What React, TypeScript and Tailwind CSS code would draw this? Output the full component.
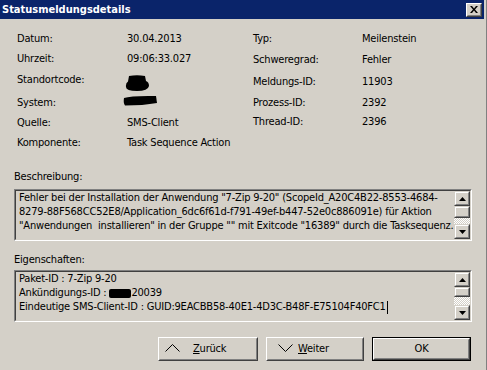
import React from "react";

const raised =
  "border border-t-[#d4d0c8] border-l-[#d4d0c8] border-b-[#404040] border-r-[#404040]";
const raisedInner =
  "border border-t-white border-l-white border-b-[#808080] border-r-[#808080]";

function ScrollBtn({ dir }: { dir: "up" | "down" }) {
  return (
    <div className={`h-[15px] w-[16px] ${raised} bg-[#d4d0c8]`}>
      <div className={`h-full w-full ${raisedInner} flex items-center justify-center`}>
        <svg width="7" height="4" viewBox="0 0 7 4">
          {dir === "up" ? (
            <polygon points="3.5,0 7,4 0,4" fill="#000" />
          ) : (
            <polygon points="0,0 7,0 3.5,4" fill="#000" />
          )}
        </svg>
      </div>
    </div>
  );
}

function ScrollBar({ thumb, track }: { thumb: string; track: string }) {
  return (
    <div className="w-[16px] flex flex-col shrink-0">
      <ScrollBtn dir="up" />
      <div className={`${thumb} w-[16px] ${raised} bg-[#d4d0c8]`}>
        <div className={`h-full w-full ${raisedInner}`} />
      </div>
      <div
        className={`${track} w-[16px] bg-[repeating-conic-gradient(#ffffff_0_25%,#d4d0c8_0_50%)] bg-[length:2px_2px]`}
      />
      <ScrollBtn dir="down" />
    </div>
  );
}

function Box({
  children,
  thumb,
  track,
}: {
  children: React.ReactNode;
  thumb: string;
  track: string;
}) {
  return (
    <div className="ml-[14px] w-[458px] h-[52px] border border-t-[#808080] border-l-[#808080] border-b-white border-r-white">
      <div className="h-full w-full border border-t-[#404040] border-l-[#404040] border-b-[#d4d0c8] border-r-[#d4d0c8] flex">
        <div className="flex-1 overflow-hidden pl-[3px] text-[11px] leading-[14px] whitespace-pre">
          {children}
        </div>
        <ScrollBar thumb={thumb} track={track} />
      </div>
    </div>
  );
}

function Chevron({ up }: { up: boolean }) {
  return (
    <svg width="15" height="8" viewBox="0 0 15 8" className="shrink-0">
      <polyline
        points={up ? "0.5,7.5 7.5,0.5 14.5,7.5" : "0.5,0.5 7.5,7.5 14.5,0.5"}
        fill="none"
        stroke="#000"
        strokeWidth="1"
      />
    </svg>
  );
}

function PushButton({
  w,
  children,
  isDefault,
}: {
  w: string;
  children: React.ReactNode;
  isDefault?: boolean;
}) {
  const body = (
    <div className="h-full w-full border border-t-white border-l-white border-b-[#404040] border-r-[#404040]">
      <div className="h-full w-full border border-t-[#d4d0c8] border-l-[#d4d0c8] border-b-[#808080] border-r-[#808080] flex items-center">
        {children}
      </div>
    </div>
  );
  return (
    <div className={`${w} h-[24px] bg-[#d4d0c8] ${isDefault ? "border border-black" : ""}`}>
      {body}
    </div>
  );
}

export default function App() {
  const left: [string, React.ReactNode, string][] = [
    ["Datum:", "30.04.2013", "h-[20px]"],
    ["Uhrzeit:", "09:06:33.027", "h-[21px]"],
    [
      "Standortcode:",
      <svg width="25" height="17" viewBox="0 0 25 17" className="-ml-[2px] mt-[2px] block">
        <path
          d="M4 1 Q12 -0.5 20 1 L21 6 Q24 7 24 11 Q23 16 12 16 Q1 16 1 12 Q0.5 8 3 6.5 Z"
          fill="#000"
        />
      </svg>,
      "h-[23px]",
    ],
    [
      "System:",
      <svg width="34" height="11" viewBox="0 0 34 11" className="-ml-[4px] -mt-[1px] block">
        <path d="M1 3 Q8 0.5 33 1 L34 8 Q20 10.5 2 10.5 Q0 8 1 3 Z" fill="#000" />
      </svg>,
      "h-[20px]",
    ],
    ["Quelle:", "SMS-Client", "h-[20px]"],
    ["Komponente:", "Task Sequence Action", "h-[13px]"],
  ];
  const right: [string, string, string][] = [
    ["Typ:", "Meilenstein", "h-[21px]"],
    ["Schweregrad:", "Fehler", "h-[22px]"],
    ["Meldungs-ID:", "11903", "h-[21px]"],
    ["Prozess-ID:", "2392", "h-[19px]"],
    ["Thread-ID:", "2396", "h-[13px]"],
  ];

  return (
    <div className="w-[487px] h-[370px] bg-[#d4d0c8] flex overflow-hidden text-black tracking-[-0.2px] font-['DejaVu_Sans_Condensed','DejaVu_Sans','Liberation_Sans',sans-serif]">
      <div className="w-[484px] flex flex-col">
        {/* Title bar */}
        <div className="h-[19px] bg-[#0a246a] flex items-center justify-between pl-[2px] pr-[2px]">
          <span className="text-white font-bold text-[11px] leading-[13px] tracking-normal">
            Statusmeldungsdetails
          </span>
          <div className="w-[16px] h-[14px] border border-t-white border-l-white border-b-[#404040] border-r-[#404040] bg-[#d4d0c8]">
            <div className="h-full w-full border border-t-[#d4d0c8] border-l-[#d4d0c8] border-b-[#808080] border-r-[#808080] flex items-center justify-center">
              <svg width="8" height="7" viewBox="0 0 8 7">
                <path d="M0 0 L2 0 L4 2.5 L6 0 L8 0 L5 3.5 L8 7 L6 7 L4 4.5 L2 7 L0 7 L3 3.5 Z" fill="#000" />
              </svg>
            </div>
          </div>
        </div>

        {/* Fields */}
        <div className="flex pt-[13px] text-[11px] leading-[13px]">
          <div className="w-[236px] pl-[17px] flex flex-col">
            {left.map(([l, v, h], i) => (
              <div key={i} className={`${h} flex`}>
                <div className="w-[110px] shrink-0">{l}</div>
                <div>{v}</div>
              </div>
            ))}
          </div>
          <div className="pl-[17px] flex flex-col">
            {right.map(([l, v, h], i) => (
              <div key={i} className={`${h} flex`}>
                <div className="w-[109px] shrink-0">{l}</div>
                <div>{v}</div>
              </div>
            ))}
          </div>
        </div>

        {/* Beschreibung */}
        <div className="mt-[21px] pl-[14px] text-[11px] leading-[13px] h-[13px]">Beschreibung:</div>
        <div className="mt-[6px]">
          <Box thumb="h-[12px]" track="h-[6px]">
            {"Fehler bei der Installation der Anwendung \"7-Zip 9-20\" (ScopeId_A20C4B22-8553-4684-\n8279-88F568CC52E8/Application_6dc6f61d-f791-49ef-b447-52e0c886091e) für Aktion\n\"Anwendungen  installieren\" in der Gruppe \"\" mit Exitcode \"16389\" durch die Tasksequenz."}
          </Box>
        </div>

        {/* Eigenschaften */}
        <div className="mt-[12px] pl-[14px] text-[11px] leading-[13px] h-[13px]">Eigenschaften:</div>
        <div className="mt-[4px]">
          <Box thumb="h-[10px]" track="h-[8px]">
            <div>Paket-ID : 7-Zip 9-20</div>
            <div className="flex items-center">
              <span>Ankündigungs-ID : </span>
              <span className="inline-block w-[22px] h-[9px] bg-black rounded-[2px]" />
              <span>20039</span>
            </div>
            <div className="flex items-center">
              <span>Eindeutige SMS-Client-ID : GUID:9EACBB58-40E1-4D3C-B48F-E75104F40FC1</span>
              <span className="inline-block w-[1px] h-[13px] bg-black ml-[1px]" />
            </div>
          </Box>
        </div>

        {/* Buttons */}
        <div className="mt-[15px] flex pl-[158px] gap-[8px] text-[11px] leading-[13px]">
          <PushButton w="w-[100px]">
            <div className="pl-[5px] pb-[2px] flex items-center">
              <Chevron up />
              <span className="ml-[13px]">
                <span className="underline underline-offset-[1px]">Z</span>urück
              </span>
            </div>
          </PushButton>
          <PushButton w="w-[98px]">
            <div className="pl-[10px] pb-[2px] flex items-center">
              <Chevron up={false} />
              <span className="ml-[5px]">
                <span className="underline underline-offset-[1px]">W</span>eiter
              </span>
            </div>
          </PushButton>
          <PushButton w="w-[99px]" isDefault>
            <div className="w-full text-center pb-[2px]">OK</div>
          </PushButton>
        </div>
      </div>
      <div className="w-[3px] border-r border-[#808080]" />
    </div>
  );
}
